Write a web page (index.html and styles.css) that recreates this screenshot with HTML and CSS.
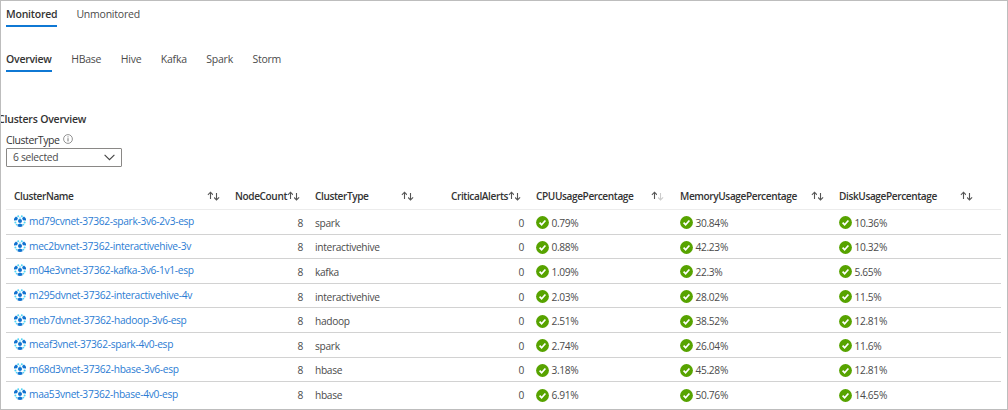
FILE: index.html
```html
<!DOCTYPE html>
<html lang="en">
<head>
<meta charset="utf-8">
<title>Clusters Overview</title>
<link rel="stylesheet" href="styles.css">
</head>
<body>
<svg class="defs" width="0" height="0">
  <symbol id="cluster" viewBox="0 0 12 12">
    <g fill="#50d4f5"><circle cx="4.2" cy="1.2" r="1"/><circle cx="7.8" cy="1.2" r="1"/><circle cx="1.4" cy="7.4" r="1"/><circle cx="10.6" cy="7.4" r="1"/><circle cx="2.6" cy="9.6" r=".9"/><circle cx="9.4" cy="9.6" r=".9"/><circle cx="6" cy="3.1" r=".8"/></g>
    <g fill="#0f72d0"><path d="M0 3.4 2 1.5 3.9 3.1 3.1 5.2 0 5.4z"/><path d="M12 3.4 10 1.5 8.1 3.1l.8 2.1 3.1.2z"/><circle cx="6" cy="6" r="2"/><path d="M3.6 9.4 6 8.4l2.4 1v2.2L6 12l-2.4-.4z"/></g>
  </symbol>
  <symbol id="check" viewBox="0 0 13 13"><circle cx="6.5" cy="6.5" r="6.4" fill="#57a300"/><path d="M3.6 6.7 5.6 8.7 9.4 4.5" fill="none" stroke="#fff" stroke-width="1.7"/></symbol>
  <symbol id="up" viewBox="0 0 6 10"><path d="M3.5 8V1.2M.9 3.8 3.5 1.2l2.5 2.6" fill="none" stroke="currentColor" stroke-width="1.1"/></symbol>
  <symbol id="down" viewBox="0 0 6 10"><path d="M2.5 2V9M0 6.4 2.5 9l2.6-2.6" fill="none" stroke="currentColor" stroke-width="1.1"/></symbol>
</svg>
<main class="panel">
  <nav class="tabs tabs-main"><a class="tab active">Monitored</a><a class="tab">Unmonitored</a></nav>
  <nav class="tabs tabs-sub"><a class="tab active">Overview</a><a class="tab">HBase</a><a class="tab">Hive</a><a class="tab">Kafka</a><a class="tab">Spark</a><a class="tab">Storm</a></nav>
  <h2 class="title">Clusters Overview</h2>
  <div class="label"><span>ClusterType</span>
    <svg class="info" viewBox="0 0 10 10"><circle cx="5" cy="5" r="4.4" fill="none" stroke="#777" stroke-width=".8"/><path d="M5 4.2v3.2M5 2.4v1" stroke="#666" stroke-width=".9"/></svg>
  </div>
  <div class="select"><span>6 selected</span><svg class="chevron" viewBox="0 0 11 7"><path d="M.6.8 5.5 5.7 10.4.8" fill="none" stroke="#444" stroke-width="1.1"/></svg></div>
  <section class="table" id="table"></section>
</main>
<script src="table.js"></script>
</body>
</html>
```
FILE: table.js
```
const heads = [['ClusterName', 'name'], ['NodeCount', 'nodes'], ['ClusterType', 'type'], ['CriticalAlerts', 'alerts'], ['CPUUsagePercentage', 'cpu'], ['MemoryUsagePercentage', 'memory'], ['DiskUsagePercentage', 'disk']];
const rows = [
  ['md79cvnet-37362-spark-3v6-2v3-esp', 'spark', '0.79%', '30.84%', '10.36%'],
  ['mec2bvnet-37362-interactivehive-3v', 'interactivehive', '0.88%', '42.23%', '10.32%'],
  ['m04e3vnet-37362-kafka-3v6-1v1-esp', 'kafka', '1.09%', '22.3%', '5.65%'],
  ['m295dvnet-37362-interactivehive-4v', 'interactivehive', '2.03%', '28.02%', '11.5%'],
  ['meb7dvnet-37362-hadoop-3v6-esp', 'hadoop', '2.51%', '38.52%', '12.81%'],
  ['meaf3vnet-37362-spark-4v0-esp', 'spark', '2.74%', '26.04%', '11.6%'],
  ['m68d3vnet-37362-hbase-3v6-esp', 'hbase', '3.18%', '45.28%', '12.81%'],
  ['maa53vnet-37362-hbase-4v0-esp', 'hbase', '6.91%', '50.76%', '14.65%']
];
const icon = (id, cls) => `<svg class="${cls}"><use href="#${id}"/></svg>`;
const head = heads.map(([t, c]) => `<div class="th ${c}"><span>${t}</span><span class="sort">${icon('up', 'arrow up')}${icon('down', 'arrow down')}</span></div>`).join('');
const usage = v => `<div class="td">${icon('check', 'check')}<span>${v}</span></div>`;
document.getElementById('table').innerHTML = `<div class="row head">${head}</div>` + rows.map(r =>
  `<div class="row"><div class="td link">${icon('cluster', 'cluster')}<a>${r[0]}</a></div><div class="td count">8</div><div class="td">${r[1]}</div><div class="td count">0</div>${r.slice(2).map(usage).join('')}</div>`).join('');
```
FILE: styles.css
```css
* { box-sizing: border-box; }
body { margin: 0; background: #fff; color: #4b4b4b; font: 10.5px/14px "Open Sans", "Noto Sans", sans-serif; }
.defs { position: absolute; }
.panel { width: 1008px; height: 410px; border: 1px solid #bdbdbd; padding: 5px 6px 0 5px; overflow: hidden; }
.tabs { display: flex; gap: 19px; height: 21px; letter-spacing: -.22px; }
.tab { height: 21px; padding-top: .5px; }
.tab.active { color: #333; font-weight: 600; border-bottom: 2px solid #0f78d4; }
.tabs-sub { margin-top: 24px; gap: 19.5px; letter-spacing: -.24px; }
.title { margin: 40px 0 0 -8px; color: #333; font-size: 10.5px; line-height: 14px; font-weight: 600; letter-spacing: -.2px; }
.label { display: flex; gap: 3px; height: 14px; margin-top: 7px; color: #333; letter-spacing: -.4px; }
.label span { font-weight: 500; }
.info { width: 10px; height: 10px; margin-top: 1px; }
.select { display: flex; align-items: center; justify-content: space-between; width: 116px; height: 19px; margin-top: 1px; padding: 0 6px 1px; border: 1px solid #8a8886; border-radius: 1px; font-size: 10.3px; letter-spacing: -.3px; }
.chevron { width: 11px; height: 7px; }
.table { width: 995px; margin-top: 17px; font-size: 10.2px; letter-spacing: -.32px; }
.row { display: grid; grid-template-columns: 222px 79px 136px 85px 144px 159px 170px; height: 24.6px; border-bottom: 1px solid #d2d2d2; }
.row:last-child { border: 0; }
.row.head { height: 26px; border-color: #ececec; color: #333; font-size: 10.1px; font-weight: 600; letter-spacing: -.4px; }
.th, .td { display: flex; align-items: center; min-width: 0; padding-left: 8px; white-space: nowrap; }
.th { justify-content: space-between; padding-right: 8px; padding-bottom: 1px; }
.alerts, .nodes { justify-content: flex-end; padding-left: 7px; }
.nodes { padding-right: 7px; }
.alerts { padding-right: 7px; }
.type { padding-right: 29px; }
.cpu { padding-right: 8px; }
.memory { padding-right: 7px; }
.disk { padding-right: 28px; }
.td { padding-top: 2px; }
.link { color: #2b7cd3; padding-top: 0; padding-bottom: 1px; letter-spacing: -.3px; }
.count { justify-content: flex-end; padding-right: 4px; }
.sort { display: flex; gap: 1px; color: #555; }
.arrow { width: 6px; height: 10px; }
.cpu .down { color: #ccc; }
.cluster { width: 12px; height: 12px; margin-right: 3px; }
.check { width: 13px; height: 13px; margin-right: 2.5px; }
```
